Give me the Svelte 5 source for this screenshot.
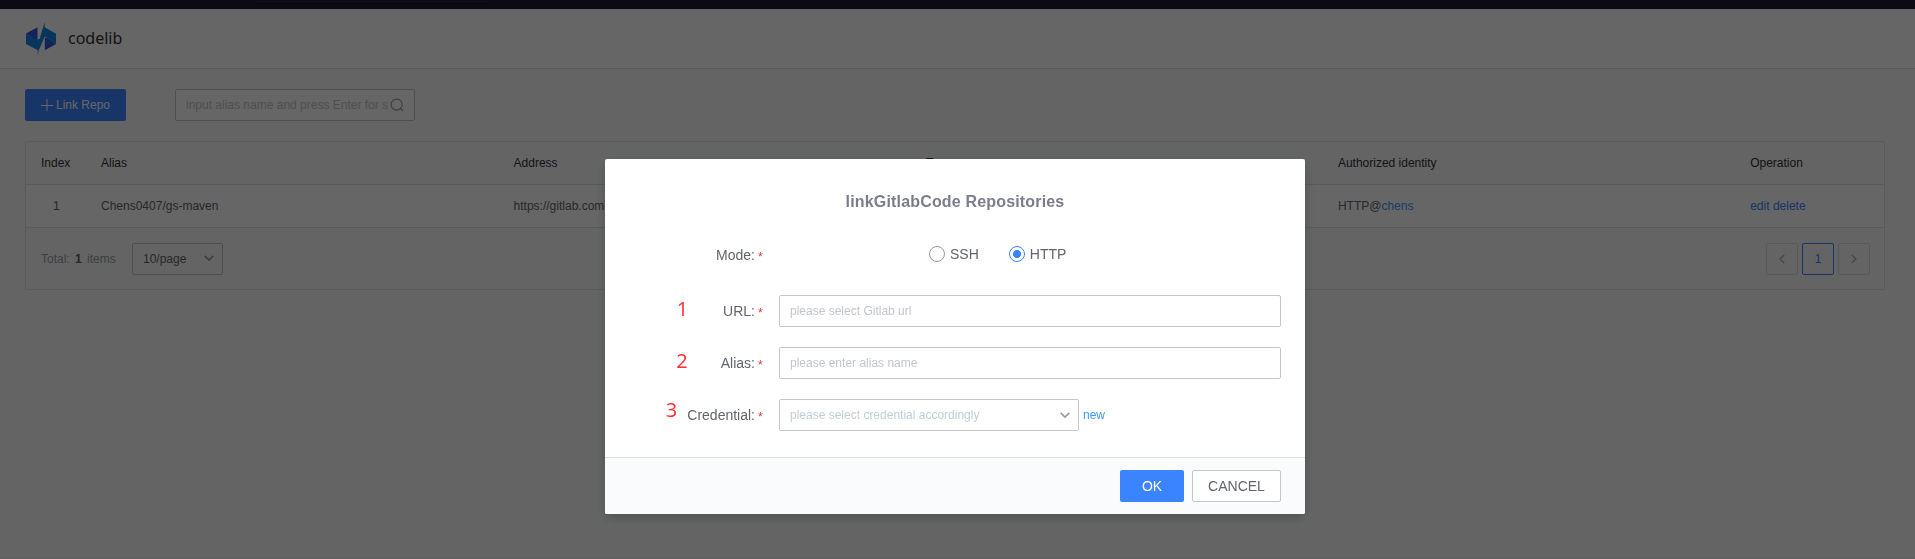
<script>
  let mode = $state('HTTP');
  const columns = ['Index', 'Alias', 'Address', 'Type', 'Authorized identity', 'Operation'];
  const fields = [
    { step: '1', label: 'URL', hint: 'please select Gitlab url' },
    { step: '2', label: 'Alias', hint: 'please enter alias name' }
  ];
</script>

<div class="page">
  <div class="topbar"><div class="topsearch"></div></div>
  <header>
    <svg class="logo" width="30" height="34" viewBox="0 0 30 34">
      <path d="M0 11.5 11.5 5.2V17.5L9 18Z" fill="#3159de" />
      <path d="M30 22 18.8 28.3V16L21 15.5Z" fill="#3159de" />
      <path d="M0 11.5 9.5 17.8 13.6 17 18.7 0V5.2L30 11.7V22L20.8 15.6 18.6 14.8 12.6 28.8 11.8 34V28.3L0 22Z" fill="#0f88e5" />
    </svg>
    <span>codelib</span>
  </header>
  <main>
    <div class="tools">
      <button class="link-repo">
        <svg width="12" height="12" viewBox="0 0 12 12"><path d="M6 0V12M0 6.5H12" stroke="#fff" stroke-width="1" /></svg>
        <span>Link Repo</span>
      </button>
      <div class="search">
        <span>input alias name and press Enter for s</span>
        <svg width="14" height="14" viewBox="0 0 14 14" fill="none" stroke="#979ba5" stroke-width="1.1"><circle cx="6.6" cy="6.6" r="5.5" /><path d="m10.5 10.5 2.5 2.5" /></svg>
      </div>
    </div>
    <div class="table">
      <div class="row head">
        {#each columns as c}<div>{c}</div>{/each}
      </div>
      <div class="row">
        <div class="idx">1</div>
        <div>Chens0407/gs-maven</div>
        <div>https://gitlab.com</div>
        <div></div>
        <div>HTTP@<a class="sky">chens</a></div>
        <div><a>edit</a> <a>delete</a></div>
      </div>
      <div class="foot">
        <span class="total">Total: <b>1</b> items</span>
        <div class="size">
          <span>10/page</span>
          <svg width="10" height="7" viewBox="0 0 10 7" fill="none" stroke="#979ba5" stroke-width="1.5"><path d="m.7.9 4.3 4.2L9.3.9" /></svg>
        </div>
        <div class="pager">
          <button aria-label="Previous"><svg width="6" height="10" viewBox="0 0 6 10" fill="none" stroke="#b4b7bf" stroke-width="1.5"><path d="M5.2 1 1 5l4.2 4" /></svg></button>
          <button class="current">1</button>
          <button aria-label="Next"><svg width="6" height="10" viewBox="0 0 6 10" fill="none" stroke="#b4b7bf" stroke-width="1.5"><path d="M.8 1 5 5 .8 9" /></svg></button>
        </div>
      </div>
    </div>
  </main>
</div>

<div class="mask">
  <div class="dialog">
    <h3>linkGitlabCode Repositories</h3>
    <div class="field mode">
      <div class="label">Mode:<i>*</i></div>
      <div class="radios">
        {#each ['SSH', 'HTTP'] as m}
          <button class="radio" class:on={mode === m} onclick={() => (mode = m)}><span class="dot"></span>{m}</button>
        {/each}
      </div>
    </div>
    {#each fields as f}
      <div class="field">
        <div class="label"><em class="s{f.step}">{f.step}</em>{f.label}:<i>*</i></div>
        <div class="input">{f.hint}</div>
      </div>
    {/each}
    <div class="field">
      <div class="label"><em class="s3">3</em>Credential:<i>*</i></div>
      <div class="input select">
        <span>please select credential accordingly</span>
        <svg width="10" height="7" viewBox="0 0 10 7" fill="none" stroke="#979ba5" stroke-width="1.6"><path d="m.7.9 4.3 4.2L9.3.9" /></svg>
      </div>
      <a class="new">new</a>
    </div>
    <div class="actions">
      <button class="ok">OK</button>
      <button class="cancel">CANCEL</button>
    </div>
  </div>
</div>

<style>
  :global(body) { overflow: hidden; }
  .page, .mask { font-family: "Liberation Sans", Arial, sans-serif; font-size: 12px; color: #63656e; box-sizing: border-box; }
  .page *, .mask * { box-sizing: border-box; }
  button { font: inherit; padding: 0; }
  .page { height: 559px; background: #fafbfd; display: flex; flex-direction: column; border-bottom: 1px solid #efeaed; }
  .topbar { height: 9px; flex: none; background: #1e1c30; padding-left: 255px; }
  .topsearch { width: 233px; height: 2px; border: 1px solid #2d2c3d; border-top: 0; border-radius: 0 0 2px 2px; }
  header { height: 60px; flex: none; background: #fff; border-bottom: 1px solid #dcdee5; display: flex; align-items: center; padding-left: 26px; }
  header span { font-family: "Noto Sans", sans-serif; font-size: 16px; color: #313238; margin: -1px 0 0 12px; }
  main { padding: 20px 30px 0 25px; }
  .tools { display: flex; gap: 49px; height: 32px; }
  .link-repo { width: 101px; height: 32px; border: 0; border-radius: 2px; background: #3a84ff; color: #fff; display: flex; align-items: center; justify-content: center; gap: 3px; }
  .search { width: 240px; height: 32px; border: 1px solid #c4c6cc; border-radius: 2px; display: flex; align-items: center; justify-content: space-between; padding: 0 10px; color: #c4c6cc; white-space: nowrap; background: #fff; }
  .search svg { flex: none; }
  .table { margin-top: 20px; height: 149px; border: 1px solid #dfe0e5; border-radius: 2px; }
  .row { height: 43px; display: grid; grid-template-columns: 60px 412.6px 412.3px 412px 412.3px 1fr; align-items: center; border-bottom: 1px solid #dfe0e5; background: #fff; }
  .row > div { padding-left: 15px; white-space: nowrap; }
  .row > .idx { padding-left: 27px; }
  .head { background: #fafbfd; color: #313238; }
  a { color: #3a84ff; }
  .sky, .new { color: #3c96ff; }
  .foot { height: 61px; display: flex; align-items: center; padding: 0 14px 0 15px; }
  .total { color: #979ba5; width: 91px; word-spacing: 1px; white-space: nowrap; }
  .total b { color: #63656e; margin: 0 1px; }
  .size { width: 91px; height: 32px; border: 1px solid #c4c6cc; border-radius: 2px; display: flex; align-items: center; justify-content: space-between; padding: 0 8px 0 10px; }
  .pager { margin-left: auto; display: flex; gap: 4px; }
  .pager button { width: 32px; height: 32px; border: 1px solid #dcdee5; border-radius: 2px; background: none; display: flex; align-items: center; justify-content: center; }
  .pager .current { border-color: #3a84ff; color: #3a84ff; }
  .mask { position: fixed; inset: 0; background: rgba(0, 0, 0, .6); display: flex; align-items: flex-start; padding: 159px 0 0 605px; }
  .dialog { width: 700px; height: 355px; background: #fff; border-radius: 2px; box-shadow: 0 4px 12px rgba(0, 0, 0, .2); display: flex; flex-direction: column; }
  h3 { margin: 32px 0 0; height: 22px; line-height: 22px; text-align: center; font-size: 16px; letter-spacing: .17px; color: #7b7d8a; }
  .field { display: flex; height: 32px; margin-bottom: 20px; align-items: center; flex: none; }
  .mode { margin: 26px 0 24px; }
  .label { width: 174px; padding: 0 16px 1px 0; font-size: 14px; display: flex; align-items: center; justify-content: flex-end; }
  .label i { font-style: normal; color: #ea3636; font-size: 12px; width: 5px; margin: 4px 0 0 3px; line-height: 14px; }
  .label em { font: 500 20px/24px "Open Sans", "Noto Sans", sans-serif; color: #ff2d2d; }
  .s1 { margin: -3px 35px 0 0; }
  .s2 { margin: -3px 33px 0 0; }
  .label .s3 { margin: -9px 10px 0 0; }
  .radios { flex: 1; display: flex; padding: 0 0 2px 150px; gap: 30px; }
  .radio { display: flex; align-items: center; gap: 5px; border: 0; background: none; font-size: 14px; color: #63656e; }
  .dot { width: 16px; height: 16px; border: 1px solid #979ba5; border-radius: 50%; background: #fff; }
  .on .dot { border-color: #3a84ff; background: radial-gradient(circle at center, #3a84ff 0 3.7px, #fff 4.3px); }
  .input { width: 502px; height: 32px; border: 1px solid #c4c6cc; border-radius: 2px; padding: 0 10px; line-height: 30px; color: #c3c6ce; }
  .select { width: 300px; display: flex; align-items: center; justify-content: space-between; padding-right: 8px; color: #c3cdd7; }
  .new { margin-left: 4px; }
  .actions { margin-top: 6px; height: 57px; border-top: 1px solid #dcdee5; background: #fafbfd; border-radius: 0 0 2px 2px; padding: 12px 24px 0 0; display: flex; justify-content: flex-end; gap: 8px; font-size: 14px; }
  .ok { width: 64px; height: 32px; border: 0; border-radius: 2px; background: #3a84ff; color: #fff; }
  .cancel { width: 89px; height: 32px; border: 1px solid #c4c6cc; border-radius: 2px; background: #fff; color: #63656e; }
</style>
